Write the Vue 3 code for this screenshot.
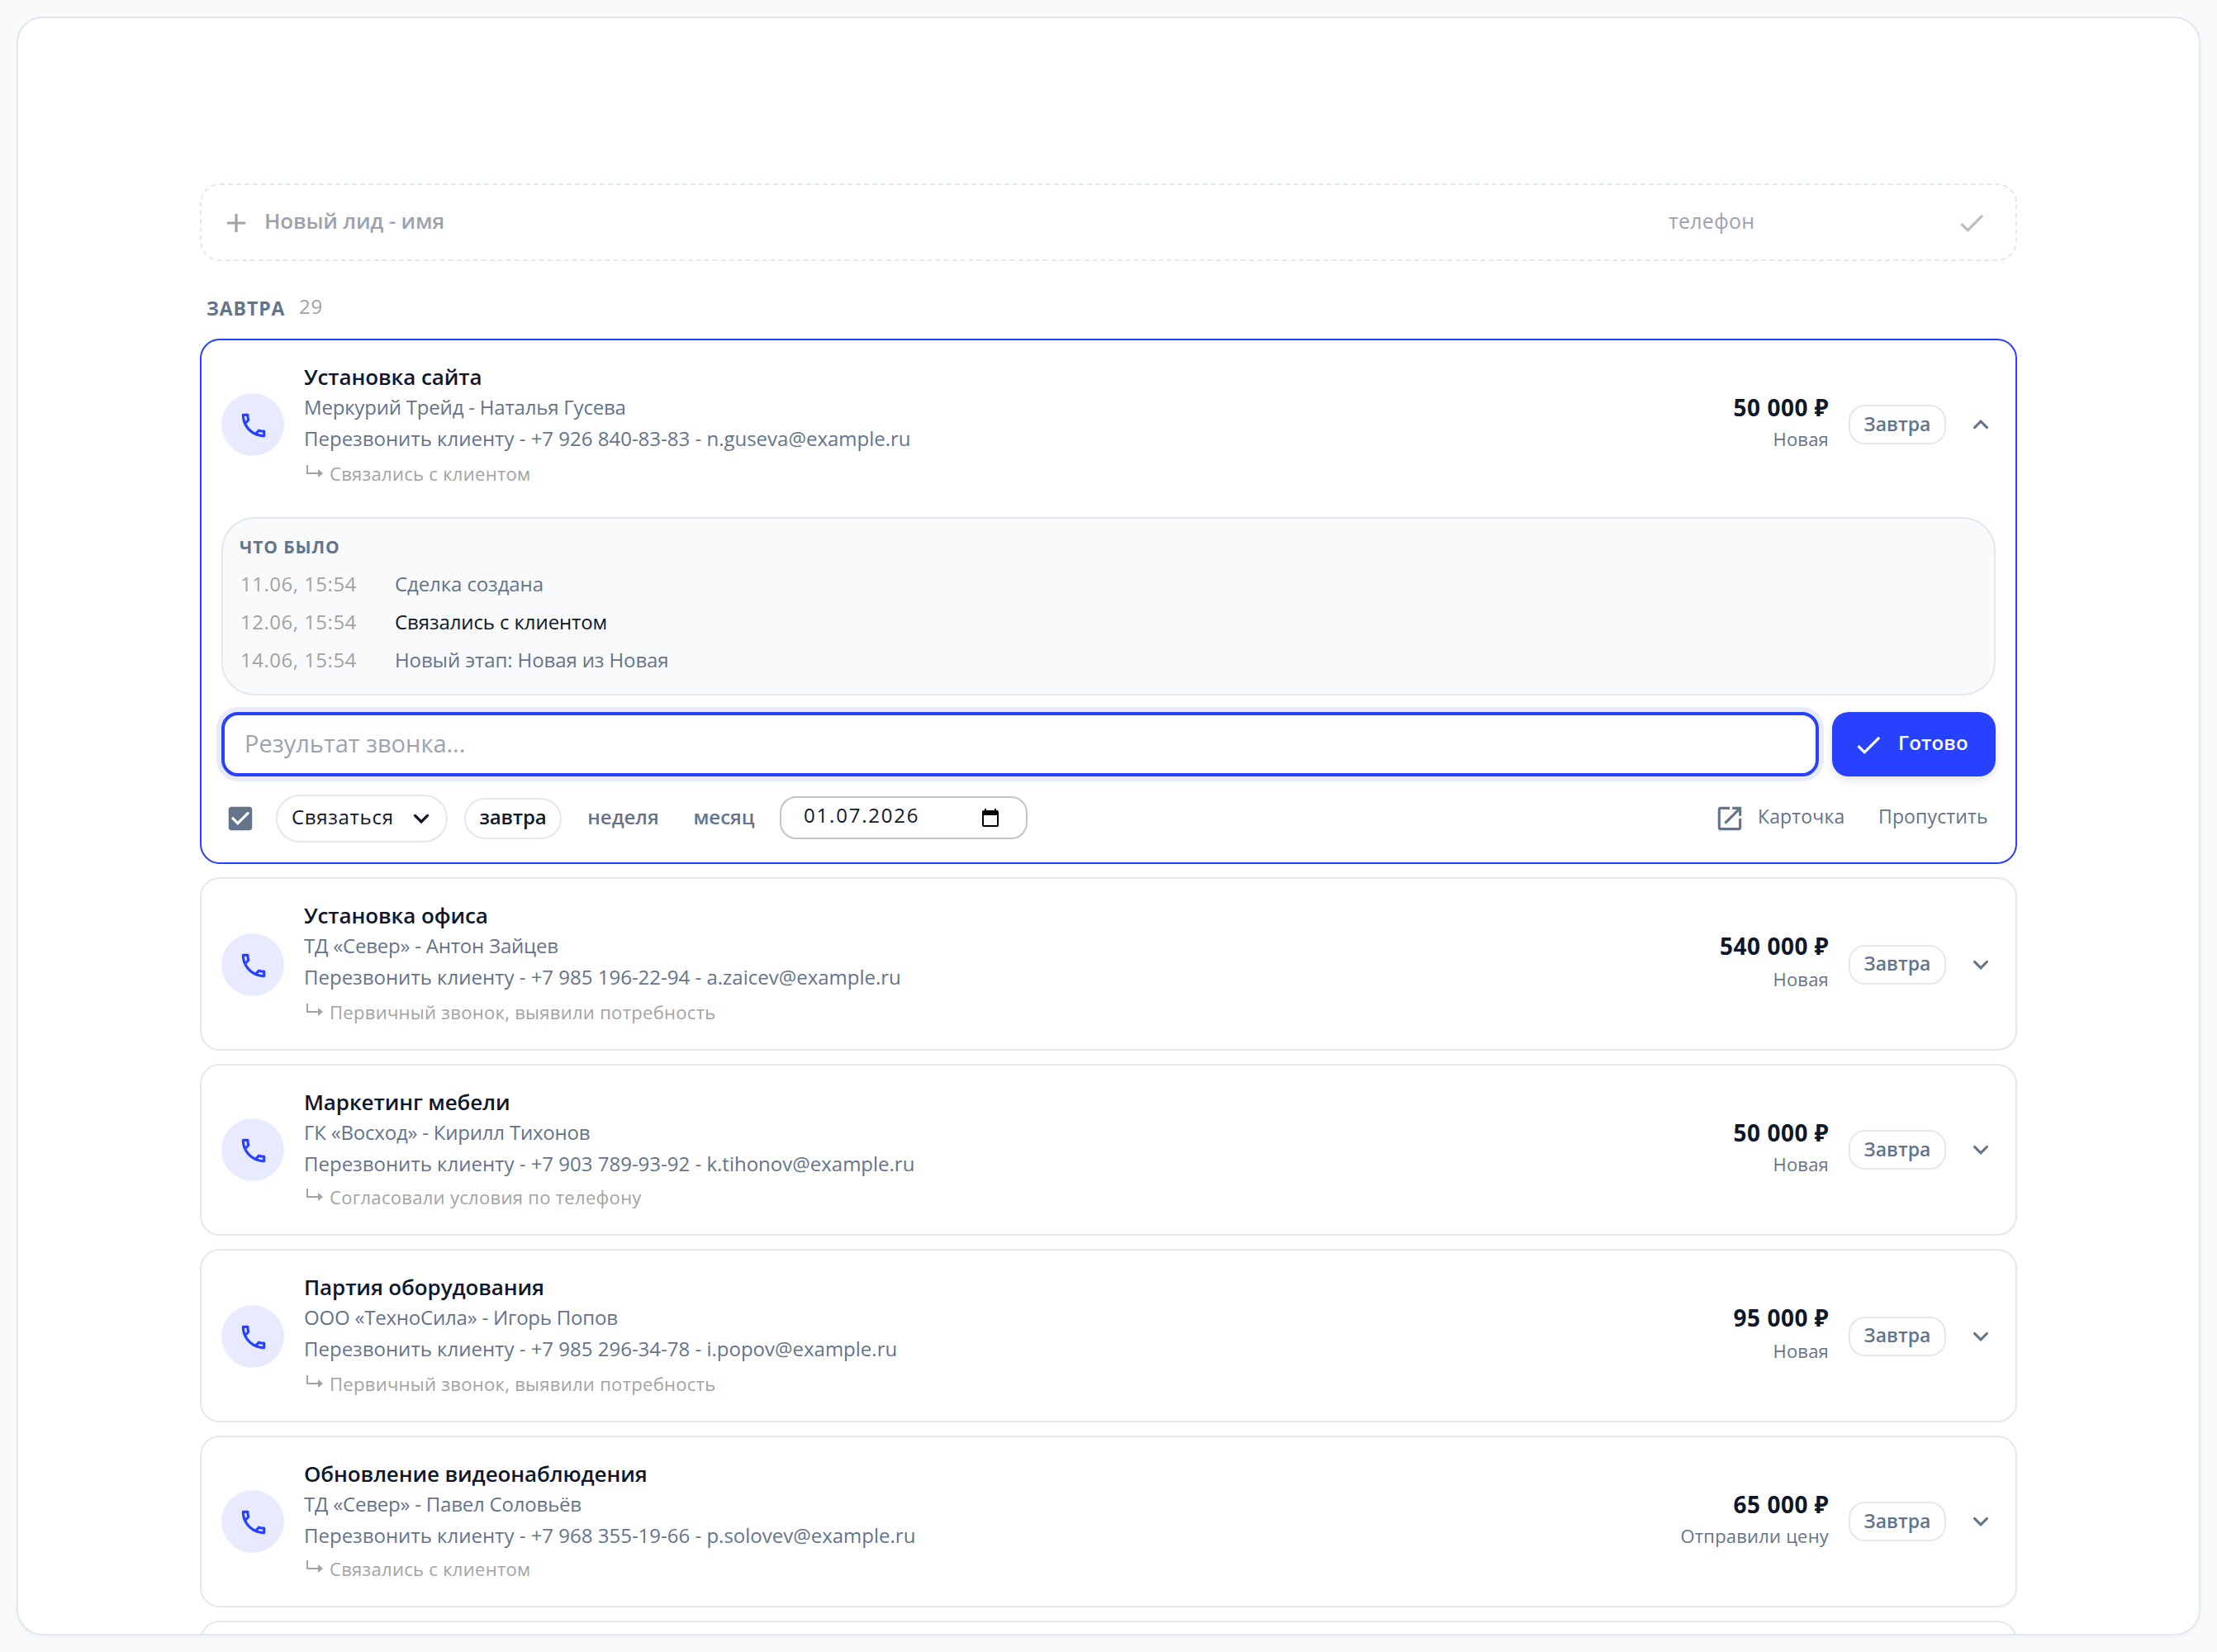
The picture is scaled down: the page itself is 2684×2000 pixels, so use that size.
<script setup>
import { ref } from 'vue'

const leads = ref([
  {
    title: 'Установка сайта',
    client: 'Меркурий Трейд - Наталья Гусева',
    contact: 'Перезвонить клиенту - +7 926 840-83-83 - n.guseva@example.ru',
    note: 'Связались с клиентом',
    price: '50 000 ₽',
    stage: 'Новая',
    open: true
  },
  {
    title: 'Установка офиса',
    client: 'ТД «Север» - Антон Зайцев',
    contact: 'Перезвонить клиенту - +7 985 196-22-94 - a.zaicev@example.ru',
    note: 'Первичный звонок, выявили потребность',
    price: '540 000 ₽',
    stage: 'Новая',
    tall: true
  },
  {
    title: 'Маркетинг мебели',
    client: 'ГК «Восход» - Кирилл Тихонов',
    contact: 'Перезвонить клиенту - +7 903 789-93-92 - k.tihonov@example.ru',
    note: 'Согласовали условия по телефону',
    price: '50 000 ₽',
    stage: 'Новая'
  },
  {
    title: 'Партия оборудования',
    client: 'ООО «ТехноСила» - Игорь Попов',
    contact: 'Перезвонить клиенту - +7 985 296-34-78 - i.popov@example.ru',
    note: 'Первичный звонок, выявили потребность',
    price: '95 000 ₽',
    stage: 'Новая',
    tall: true
  },
  {
    title: 'Обновление видеонаблюдения',
    client: 'ТД «Север» - Павел Соловьёв',
    contact: 'Перезвонить клиенту - +7 968 355-19-66 - p.solovev@example.ru',
    note: 'Связались с клиентом',
    price: '65 000 ₽',
    stage: 'Отправили цену'
  }
])

const history = [
  { date: '11.06, 15:54', text: 'Сделка создана' },
  { date: '12.06, 15:54', text: 'Связались с клиентом', strong: true },
  { date: '14.06, 15:54', text: 'Новый этап: Новая из Новая' }
]

const toggle = (lead) => {
  lead.open = !lead.open
}
</script>

<template>
  <div class="page">
    <main class="panel">
      <div class="newLead">
        <svg class="icon muted" viewBox="0 0 24 24"><path d="M19 13h-6v6h-2v-6H5v-2h6V5h2v6h6z" /></svg>
        <span class="newName">Новый лид - имя</span>
        <span class="newPhone">телефон</span>
        <svg class="icon faded" viewBox="0 0 24 24"><path d="M9 16.17 4.83 12l-1.42 1.41L9 19 21 7l-1.41-1.41z" /></svg>
      </div>

      <div class="groupHead">
        <span class="groupName">ЗАВТРА</span>
        <span class="groupCount">29</span>
      </div>

      <div class="list">
        <div v-for="lead in leads" :key="lead.title" class="card" :class="{ open: lead.open, tall: lead.tall }">
          <div class="main" @click="toggle(lead)">
            <div class="avatar">
              <svg class="icon" viewBox="0 0 24 24"><path d="M6.54 5c.06.89.21 1.76.45 2.59l-1.2 1.2c-.41-1.2-.67-2.47-.76-3.79h1.51m9.86 12.02c.85.24 1.72.39 2.6.45v1.49c-1.32-.09-2.59-.35-3.8-.75l1.2-1.19M7.5 3H4c-.55 0-1 .45-1 1 0 9.39 7.61 17 17 17 .55 0 1-.45 1-1v-3.49c0-.55-.45-1-1-1-1.24 0-2.45-.2-3.57-.57-.1-.04-.21-.05-.31-.05-.26 0-.51.1-.71.29l-2.2 2.2c-2.83-1.45-5.15-3.76-6.59-6.59l2.2-2.2c.28-.28.36-.67.25-1.02C8.7 6.45 8.5 5.25 8.5 4c0-.55-.45-1-1-1z" /></svg>
            </div>
            <div class="info">
              <div class="title">{{ lead.title }}</div>
              <div class="meta client">{{ lead.client }}</div>
              <div class="meta">{{ lead.contact }}</div>
              <div class="note">
                <svg class="replyArrow" viewBox="0 0 20 16"><path d="M1 0v10h14" /><path class="head" d="M14 5l6 5-6 5z" /></svg>
                {{ lead.note }}
              </div>
            </div>
            <div class="deal">
              <div class="price">{{ lead.price }}</div>
              <div class="stage">{{ lead.stage }}</div>
            </div>
            <div class="due">Завтра</div>
            <svg class="chevron" viewBox="0 0 24 24">
              <path :d="lead.open ? 'M7 14.4l5-5 5 5' : 'M7 9.6l5 5 5-5'" />
            </svg>
          </div>

          <div v-if="lead.open" class="details">
            <div class="history">
              <div class="historyTitle">ЧТО БЫЛО</div>
              <div v-for="item in history" :key="item.date" class="historyRow">
                <span class="date">{{ item.date }}</span>
                <span :class="{ strong: item.strong }">{{ item.text }}</span>
              </div>
            </div>

            <div class="resultRow">
              <div class="resultInput">Результат звонка...</div>
              <button class="done">
                <svg class="icon" viewBox="0 0 24 24"><path d="M9 16.17 4.83 12l-1.42 1.41L9 19 21 7l-1.41-1.41z" /></svg>
                <span>Готово</span>
              </button>
            </div>

            <div class="nextRow">
              <svg class="icon checkbox" viewBox="0 0 24 24"><path d="M19 3H5c-1.11 0-2 .9-2 2v14c0 1.1.89 2 2 2h14c1.11 0 2-.9 2-2V5c0-1.1-.89-2-2-2zm-9 14l-5-5 1.41-1.41L10 14.17l7.59-7.59L19 8l-9 9z" /></svg>
              <div class="select">
                <span>Связаться</span>
                <svg class="chevron" viewBox="0 0 24 24"><path d="M7 9.6l5 5 5-5" /></svg>
              </div>
              <span class="quick active">завтра</span>
              <span class="quick week">неделя</span>
              <span class="quick month">месяц</span>
              <div class="dateInput">
                <span>01.07.2026</span>
                <svg class="calendar" viewBox="0 0 20 22">
                  <path d="M3 0h2v2h10V0h2v2h1a2 2 0 0 1 2 2v16a2 2 0 0 1-2 2H2a2 2 0 0 1-2-2V4a2 2 0 0 1 2-2h1zM2 8v12h16V8z" />
                </svg>
              </div>
              <div class="links">
                <svg class="icon" viewBox="0 0 24 24"><path d="M19 19H5V5h7V3H5c-1.11 0-2 .9-2 2v14c0 1.1.89 2 2 2h14c1.1 0 2-.9 2-2v-7h-2v7zM14 3v2h3.59l-9.83 9.83 1.41 1.41L19 6.41V10h2V3h-7z" /></svg>
                <span class="cardLink">Карточка</span>
                <span class="skipLink">Пропустить</span>
              </div>
            </div>
          </div>
        </div>
        <div class="card"></div>
      </div>
    </main>
  </div>
</template>

<style>
body {
  background-color: #f8fafc;
}
</style>

<style scoped>
.page {
  box-sizing: border-box;
  height: 2000px;
  padding: 20px;
  overflow: hidden;
  font-family: "Open Sans", "Noto Sans", sans-serif;
  color: #0f172a;
}

.page * {
  box-sizing: border-box;
}

.panel {
  height: 1960px;
  padding: 200px 220px 0;
  border: 2px solid #e2e8f0;
  border-radius: 32px;
  background-color: white;
  box-shadow: 0 2px 6px rgba(15, 23, 42, 0.04);
  overflow: hidden;
}

.icon {
  width: 38px;
  height: 38px;
  flex: none;
  fill: currentColor;
}

.muted {
  color: #a3a3a3;
}

.faded {
  color: #bdbdbd;
}

.newLead {
  display: flex;
  align-items: center;
  height: 94px;
  padding: 1px 34px 0 23px;
  border: 2px dashed #e2e8f0;
  border-radius: 24px;
}

.newName {
  flex: 1;
  margin-left: 15px;
  padding-bottom: 6px;
  font-size: 26px;
  font-weight: 600;
  letter-spacing: -0.2px;
  color: #9ca3af;
}

.newPhone {
  width: 348px;
  padding-bottom: 6px;
  font-size: 25px;
  letter-spacing: 0.2px;
  color: #9ca3af;
}

.groupHead {
  display: flex;
  align-items: flex-start;
  height: 94px;
  padding: 37px 0 0 8px;
  line-height: 40px;
}

.groupName {
  width: 112px;
  font-size: 23px;
  font-weight: 700;
  letter-spacing: 0.9px;
  color: #64748b;
}

.groupCount {
  line-height: 35px;
  font-size: 24px;
  letter-spacing: 0.8px;
  color: #a3a3a3;
}

.list {
  display: flex;
  flex-direction: column;
  gap: 16px;
}

.card {
  flex: none;
  min-height: 208px;
  border: 2px solid #e2e8f0;
  border-radius: 24px;
  background-color: white;
}

.card.open {
  border-color: #2841ff;
}

.main {
  display: flex;
  align-items: center;
  gap: 24px;
  height: 204px;
  padding: 0 24px;
}

.tall .main {
  height: 206px;
  padding-top: 2px;
}

.avatar {
  display: flex;
  align-items: center;
  justify-content: center;
  width: 76px;
  height: 76px;
  padding: 1px 0 0 2px;
  border-radius: 50%;
  background-color: #e8ebff;
  color: #2841ff;
}

.info {
  flex: 1;
  align-self: flex-start;
  padding-top: 26px;
}

.tall .info {
  padding-top: 24px;
}

.title {
  font-size: 26px;
  font-weight: 600;
  line-height: 36px;
  letter-spacing: -0.1px;
}

.meta {
  font-size: 24px;
  line-height: 38px;
  color: #64748b;
}

.client {
  letter-spacing: -0.2px;
}

.note {
  display: flex;
  align-items: center;
  font-size: 22px;
  line-height: 42px;
  letter-spacing: 0.3px;
  color: #a3a3a3;
}

.open .note,
.tall .note {
  line-height: 46px;
}

.replyArrow {
  width: 20px;
  height: 16px;
  margin: 0 8px 4px 3px;
  fill: none;
  stroke: #a3a3a3;
  stroke-width: 2;
}

.replyArrow .head {
  fill: #a3a3a3;
  stroke: none;
}

.deal {
  text-align: right;
}

.price {
  font-size: 28px;
  font-weight: 700;
  line-height: 35px;
  letter-spacing: 0.5px;
}

.tall .price {
  margin-top: -2px;
  margin-bottom: 2px;
}

.stage {
  font-size: 22px;
  line-height: 41px;
  letter-spacing: 0.2px;
  color: #64748b;
}

.due {
  display: flex;
  align-items: center;
  justify-content: center;
  width: 118px;
  height: 48px;
  padding-bottom: 2px;
  border: 2px solid #e2e8f0;
  border-radius: 20px;
  font-size: 23px;
  font-weight: 600;
  color: #64748b;
}

.tall .due {
  padding-bottom: 5px;
}

.chevron {
  width: 36px;
  height: 36px;
  flex: none;
  fill: none;
  stroke: #64748b;
  stroke-width: 2;
  stroke-linecap: round;
}

.details {
  padding: 10px 24px 24px;
}

.history {
  height: 216px;
  padding: 20px;
  border: 2px solid #e2e8f0;
  border-radius: 40px;
  background-color: #f8fafc;
}

.historyTitle {
  margin-bottom: 8px;
  font-size: 21px;
  font-weight: 700;
  line-height: 28px;
  letter-spacing: 0.9px;
  color: #64748b;
}

.historyRow {
  display: flex;
  padding-left: 1px;
  font-size: 24px;
  line-height: 46px;
  letter-spacing: -0.1px;
  color: #64748b;
}

.date {
  width: 187px;
  letter-spacing: 0.5px;
  color: #a3a3a3;
}

.strong {
  color: #0f172a;
}

.resultRow {
  display: flex;
  gap: 16px;
  margin-top: 20px;
}

.resultInput {
  display: flex;
  align-items: center;
  flex: 1;
  height: 78px;
  padding: 0 0 4px 24px;
  border: 4px solid #2841ff;
  border-radius: 20px;
  box-shadow: 0 0 0 6px #e8ebff;
  font-size: 29px;
  color: #9ca3af;
}

.done {
  display: flex;
  align-items: center;
  width: 198px;
  height: 78px;
  padding: 2px 0 0 25px;
  border: 0;
  border-radius: 20px;
  background-color: #2841ff;
  box-shadow: 0 4px 12px rgba(0, 0, 0, 0.12);
  font-family: inherit;
  font-size: 24px;
  font-weight: 600;
  color: white;
}

.done span {
  margin-left: 17px;
  padding-bottom: 8px;
  letter-spacing: 0.2px;
}

.nextRow {
  display: flex;
  align-items: center;
  height: 58px;
  margin-top: 22px;
  font-size: 24px;
}

.checkbox {
  margin: 0 24px 0 4px;
  color: #64748b;
}

.select {
  display: flex;
  align-items: center;
  justify-content: space-between;
  width: 208px;
  height: 58px;
  margin-right: 20px;
  padding: 0 12px 0 17px;
  border: 2px solid #e2e8f0;
  border-radius: 29px;
}

.select span {
  padding-bottom: 5px;
  letter-spacing: 0.7px;
}

.select .chevron {
  stroke: #0f172a;
  stroke-width: 2.2;
}

.quick {
  display: flex;
  align-items: center;
  justify-content: center;
  height: 50px;
  margin-right: 12px;
  padding-bottom: 5px;
  font-weight: 600;
  color: #64748b;
}

.active {
  width: 118px;
  border: 2px solid #e2e8f0;
  border-radius: 25px;
  letter-spacing: -0.2px;
  color: #0f172a;
}

.week {
  width: 125px;
}

.month {
  width: 95px;
  margin-right: 20px;
}

.dateInput {
  display: flex;
  align-items: center;
  justify-content: space-between;
  width: 300px;
  height: 52px;
  margin-bottom: 2px;
  padding: 0 33px 0 27px;
  border: 2px solid #c4c4c4;
  border-radius: 20px;
  letter-spacing: 1.8px;
}

.dateInput span {
  padding-bottom: 7px;
}

.calendar {
  width: 20px;
  height: 22px;
}

.links {
  display: flex;
  align-items: center;
  margin-left: auto;
  color: #64748b;
}

.links span {
  padding-bottom: 7px;
  font-size: 23px;
  letter-spacing: 0.15px;
}

.cardLink {
  width: 146px;
  margin-left: 15px;
}

.skipLink {
  width: 142px;
}
</style>
